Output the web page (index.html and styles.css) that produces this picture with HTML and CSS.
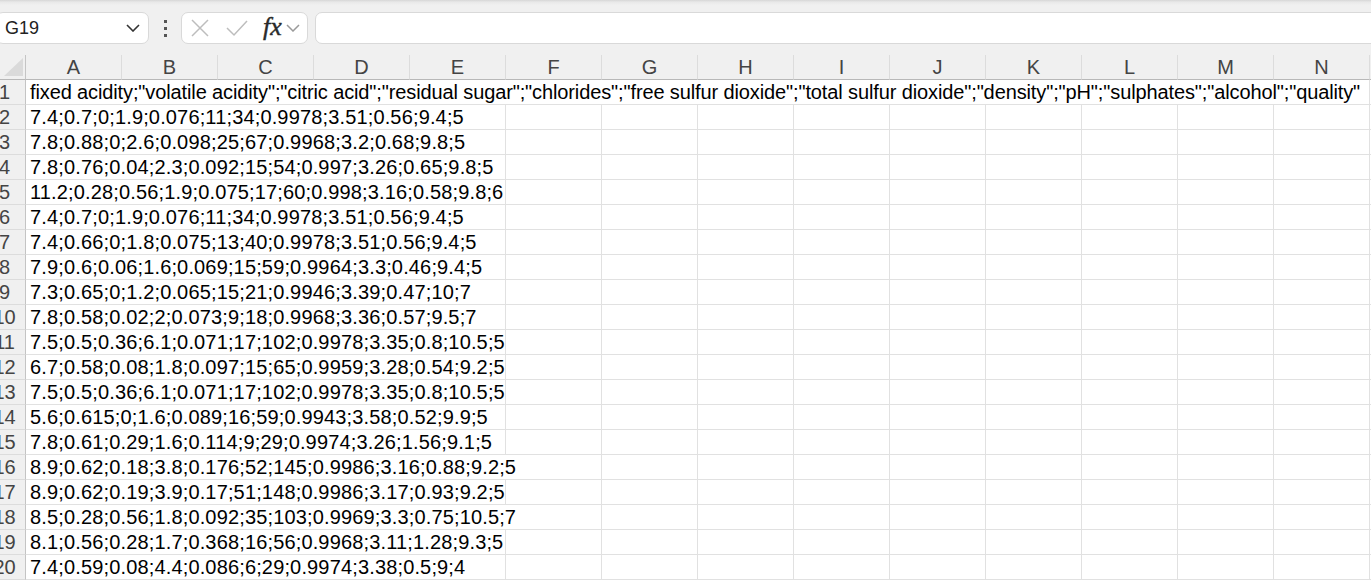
FILE: index.html
```html
<!DOCTYPE html>
<html lang="en">
<head>
<meta charset="utf-8">
<title>Sheet</title>
<link rel="stylesheet" href="styles.css">
</head>
<body>
<div class="formula-bar">
  <div class="namebox">
    <span class="namebox-text">G19</span>
    <svg class="chev-dark" width="14" height="8" viewBox="0 0 14 8"><path d="M1 1 L7 7 L13 1" fill="none" stroke="#333" stroke-width="1.6"/></svg>
  </div>
  <div class="dots"><span></span><span></span><span></span></div>
  <div class="fxbox">
    <svg class="ico-x" width="20" height="20" viewBox="0 0 20 20"><path d="M2 2 L18 18 M18 2 L2 18" fill="none" stroke="#bdbdbd" stroke-width="1.5"/></svg>
    <svg class="ico-check" width="22" height="18" viewBox="0 0 22 18"><path d="M1 9 L8 16 L21 2" fill="none" stroke="#bdbdbd" stroke-width="1.5"/></svg>
    <span class="fx">fx</span>
    <svg class="chev-light" width="14" height="8" viewBox="0 0 14 8"><path d="M1 1 L7 7 L13 1" fill="none" stroke="#9a9a9a" stroke-width="1.5"/></svg>
  </div>
  <div class="finput"></div>
</div>
<div class="sheet">
  <div class="corner"><div class="tri"></div></div>
  <div class="ch">A</div><div class="ch">B</div><div class="ch">C</div><div class="ch">D</div><div class="ch">E</div><div class="ch">F</div><div class="ch">G</div><div class="ch">H</div><div class="ch">I</div><div class="ch">J</div><div class="ch">K</div><div class="ch">L</div><div class="ch">M</div><div class="ch">N</div><div class="ch ch-last"></div>

  <div class="rh"><span>1</span></div><div class="c span14 head-text">fixed acidity;"volatile acidity";"citric acid";"residual sugar";"chlorides";"free sulfur dioxide";"total sulfur dioxide";"density";"pH";"sulphates";"alcohol";"quality"</div><div class="c"></div>

  <div class="rh"><span>2</span></div><div class="c span5 num">7.4;0.7;0;1.9;0.076;11;34;0.9978;3.51;0.56;9.4;5</div><div class="c"></div><div class="c"></div><div class="c"></div><div class="c"></div><div class="c"></div><div class="c"></div><div class="c"></div><div class="c"></div><div class="c"></div><div class="c"></div>

  <div class="rh"><span>3</span></div><div class="c span5 num">7.8;0.88;0;2.6;0.098;25;67;0.9968;3.2;0.68;9.8;5</div><div class="c"></div><div class="c"></div><div class="c"></div><div class="c"></div><div class="c"></div><div class="c"></div><div class="c"></div><div class="c"></div><div class="c"></div><div class="c"></div>

  <div class="rh"><span>4</span></div><div class="c span5 num">7.8;0.76;0.04;2.3;0.092;15;54;0.997;3.26;0.65;9.8;5</div><div class="c"></div><div class="c"></div><div class="c"></div><div class="c"></div><div class="c"></div><div class="c"></div><div class="c"></div><div class="c"></div><div class="c"></div><div class="c"></div>

  <div class="rh"><span>5</span></div><div class="c span5 num">11.2;0.28;0.56;1.9;0.075;17;60;0.998;3.16;0.58;9.8;6</div><div class="c"></div><div class="c"></div><div class="c"></div><div class="c"></div><div class="c"></div><div class="c"></div><div class="c"></div><div class="c"></div><div class="c"></div><div class="c"></div>

  <div class="rh"><span>6</span></div><div class="c span5 num">7.4;0.7;0;1.9;0.076;11;34;0.9978;3.51;0.56;9.4;5</div><div class="c"></div><div class="c"></div><div class="c"></div><div class="c"></div><div class="c"></div><div class="c"></div><div class="c"></div><div class="c"></div><div class="c"></div><div class="c"></div>

  <div class="rh"><span>7</span></div><div class="c span5 num">7.4;0.66;0;1.8;0.075;13;40;0.9978;3.51;0.56;9.4;5</div><div class="c"></div><div class="c"></div><div class="c"></div><div class="c"></div><div class="c"></div><div class="c"></div><div class="c"></div><div class="c"></div><div class="c"></div><div class="c"></div>

  <div class="rh"><span>8</span></div><div class="c span5 num">7.9;0.6;0.06;1.6;0.069;15;59;0.9964;3.3;0.46;9.4;5</div><div class="c"></div><div class="c"></div><div class="c"></div><div class="c"></div><div class="c"></div><div class="c"></div><div class="c"></div><div class="c"></div><div class="c"></div><div class="c"></div>

  <div class="rh"><span>9</span></div><div class="c span5 num">7.3;0.65;0;1.2;0.065;15;21;0.9946;3.39;0.47;10;7</div><div class="c"></div><div class="c"></div><div class="c"></div><div class="c"></div><div class="c"></div><div class="c"></div><div class="c"></div><div class="c"></div><div class="c"></div><div class="c"></div>

  <div class="rh"><span>10</span></div><div class="c span5 num">7.8;0.58;0.02;2;0.073;9;18;0.9968;3.36;0.57;9.5;7</div><div class="c"></div><div class="c"></div><div class="c"></div><div class="c"></div><div class="c"></div><div class="c"></div><div class="c"></div><div class="c"></div><div class="c"></div><div class="c"></div>

  <div class="rh"><span>11</span></div><div class="c span5 num">7.5;0.5;0.36;6.1;0.071;17;102;0.9978;3.35;0.8;10.5;5</div><div class="c"></div><div class="c"></div><div class="c"></div><div class="c"></div><div class="c"></div><div class="c"></div><div class="c"></div><div class="c"></div><div class="c"></div><div class="c"></div>

  <div class="rh"><span>12</span></div><div class="c span5 num">6.7;0.58;0.08;1.8;0.097;15;65;0.9959;3.28;0.54;9.2;5</div><div class="c"></div><div class="c"></div><div class="c"></div><div class="c"></div><div class="c"></div><div class="c"></div><div class="c"></div><div class="c"></div><div class="c"></div><div class="c"></div>

  <div class="rh"><span>13</span></div><div class="c span5 num">7.5;0.5;0.36;6.1;0.071;17;102;0.9978;3.35;0.8;10.5;5</div><div class="c"></div><div class="c"></div><div class="c"></div><div class="c"></div><div class="c"></div><div class="c"></div><div class="c"></div><div class="c"></div><div class="c"></div><div class="c"></div>

  <div class="rh"><span>14</span></div><div class="c span5 num">5.6;0.615;0;1.6;0.089;16;59;0.9943;3.58;0.52;9.9;5</div><div class="c"></div><div class="c"></div><div class="c"></div><div class="c"></div><div class="c"></div><div class="c"></div><div class="c"></div><div class="c"></div><div class="c"></div><div class="c"></div>

  <div class="rh"><span>15</span></div><div class="c span5 num">7.8;0.61;0.29;1.6;0.114;9;29;0.9974;3.26;1.56;9.1;5</div><div class="c"></div><div class="c"></div><div class="c"></div><div class="c"></div><div class="c"></div><div class="c"></div><div class="c"></div><div class="c"></div><div class="c"></div><div class="c"></div>

  <div class="rh"><span>16</span></div><div class="c span6 num">8.9;0.62;0.18;3.8;0.176;52;145;0.9986;3.16;0.88;9.2;5</div><div class="c"></div><div class="c"></div><div class="c"></div><div class="c"></div><div class="c"></div><div class="c"></div><div class="c"></div><div class="c"></div><div class="c"></div>

  <div class="rh"><span>17</span></div><div class="c span5 num">8.9;0.62;0.19;3.9;0.17;51;148;0.9986;3.17;0.93;9.2;5</div><div class="c"></div><div class="c"></div><div class="c"></div><div class="c"></div><div class="c"></div><div class="c"></div><div class="c"></div><div class="c"></div><div class="c"></div><div class="c"></div>

  <div class="rh"><span>18</span></div><div class="c span6 num">8.5;0.28;0.56;1.8;0.092;35;103;0.9969;3.3;0.75;10.5;7</div><div class="c"></div><div class="c"></div><div class="c"></div><div class="c"></div><div class="c"></div><div class="c"></div><div class="c"></div><div class="c"></div><div class="c"></div>

  <div class="rh"><span>19</span></div><div class="c span5 num">8.1;0.56;0.28;1.7;0.368;16;56;0.9968;3.11;1.28;9.3;5</div><div class="c"></div><div class="c"></div><div class="c"></div><div class="c"></div><div class="c"></div><div class="c"></div><div class="c"></div><div class="c"></div><div class="c"></div><div class="c"></div>

  <div class="rh"><span>20</span></div><div class="c span5 num">7.4;0.59;0.08;4.4;0.086;6;29;0.9974;3.38;0.5;9;4</div><div class="c"></div><div class="c"></div><div class="c"></div><div class="c"></div><div class="c"></div><div class="c"></div><div class="c"></div><div class="c"></div><div class="c"></div><div class="c"></div>
</div>
</body>
</html>
```
FILE: styles.css
```css
html, body {
  margin: 0;
  padding: 0;
}
body {
  width: 1371px;
  height: 580px;
  overflow: hidden;
  background: #f0f0f0;
  font-family: "Liberation Sans", Arial, sans-serif;
}
.formula-bar {
  height: 55px;
  box-sizing: border-box;
  padding-top: 12px;
  display: flex;
  align-items: flex-start;
  background: linear-gradient(#d6d6d6 0px, #e8e8e8 2px, #f0f0f0 5px, #f0f0f0 100%);
  overflow: hidden;
}
.namebox {
  margin-left: -4px;
  width: 153px;
  height: 32px;
  box-sizing: border-box;
  background: #fff;
  border: 1px solid #d9d9d9;
  border-radius: 7px;
  display: flex;
  align-items: center;
  justify-content: space-between;
  padding: 0 8px 0 8px;
}
.namebox-text {
  font-size: 18px;
  color: #222;
  padding-top: 1px;
}
.chev-dark {
  display: block;
}
.dots {
  width: 32px;
  height: 32px;
  display: flex;
  flex-direction: column;
  align-items: center;
  justify-content: center;
  gap: 4px;
}
.dots span {
  width: 3px;
  height: 3px;
  background: #555;
}
.fxbox {
  width: 127px;
  height: 32px;
  box-sizing: border-box;
  background: #fff;
  border: 1px solid #d9d9d9;
  border-radius: 7px;
  display: flex;
  align-items: center;
  padding-left: 8px;
}
.ico-x {
  display: block;
}
.ico-check {
  display: block;
  margin-left: 16px;
}
.fx {
  font-family: "Liberation Serif", "Times New Roman", serif;
  font-style: italic;
  font-size: 26px;
  color: #2a2a2a;
  margin-left: 15px;
  line-height: 1;
  margin-top: -3px;
  -webkit-text-stroke: 0.4px #2a2a2a;
}
.chev-light {
  display: block;
  margin-left: 4px;
}
.finput {
  flex: 1;
  height: 32px;
  box-sizing: border-box;
  margin-left: 7px;
  margin-right: -10px;
  background: #fff;
  border: 1px solid #d9d9d9;
  border-radius: 7px;
}
.sheet {
  display: grid;
  grid-template-columns: 26px repeat(14, 96px) 1fr;
  grid-auto-rows: 25px;
  background: #fff;
}
.corner {
  background: #f0f0f0;
  border-right: 1px solid #c4c4c4;
  border-bottom: 1px solid #b8b8b8;
  box-sizing: border-box;
  display: flex;
  align-items: flex-end;
  justify-content: flex-end;
  padding: 0 2px 3px 0;
}
.tri {
  width: 19px;
  height: 18px;
  background: #dadada;
  clip-path: polygon(100% 0, 100% 100%, 0 100%);
}
.ch {
  background: #f0f0f0;
  border-right: 1px solid #dcdcdc;
  border-bottom: 1px solid #b8b8b8;
  box-sizing: border-box;
  text-align: center;
  font-size: 20px;
  line-height: 24px;
  color: #444;
}
.ch-last {
  border-right: none;
}
.rh {
  background: #f0f0f0;
  border-right: 1px solid #c4c4c4;
  border-bottom: 1px solid #dcdcdc;
  box-sizing: border-box;
  overflow: hidden;
  display: flex;
  justify-content: center;
  padding-right: 16px;
  font-size: 20px;
  line-height: 25px;
  color: #444;
}
.rh span {
  white-space: nowrap;
  flex: none;
}
.c {
  border-right: 1px solid #e1e1e1;
  border-bottom: 1px solid #e1e1e1;
  box-sizing: border-box;
  font-size: 20px;
  line-height: 25px;
  color: #000;
  white-space: nowrap;
  padding-left: 4px;
  overflow: visible;
}
.head-text {
  letter-spacing: -0.12px;
}
.num {
  letter-spacing: 0.15px;
}
.span5 {
  grid-column: span 5;
}
.span6 {
  grid-column: span 6;
}
.span14 {
  grid-column: span 14;
}
```
